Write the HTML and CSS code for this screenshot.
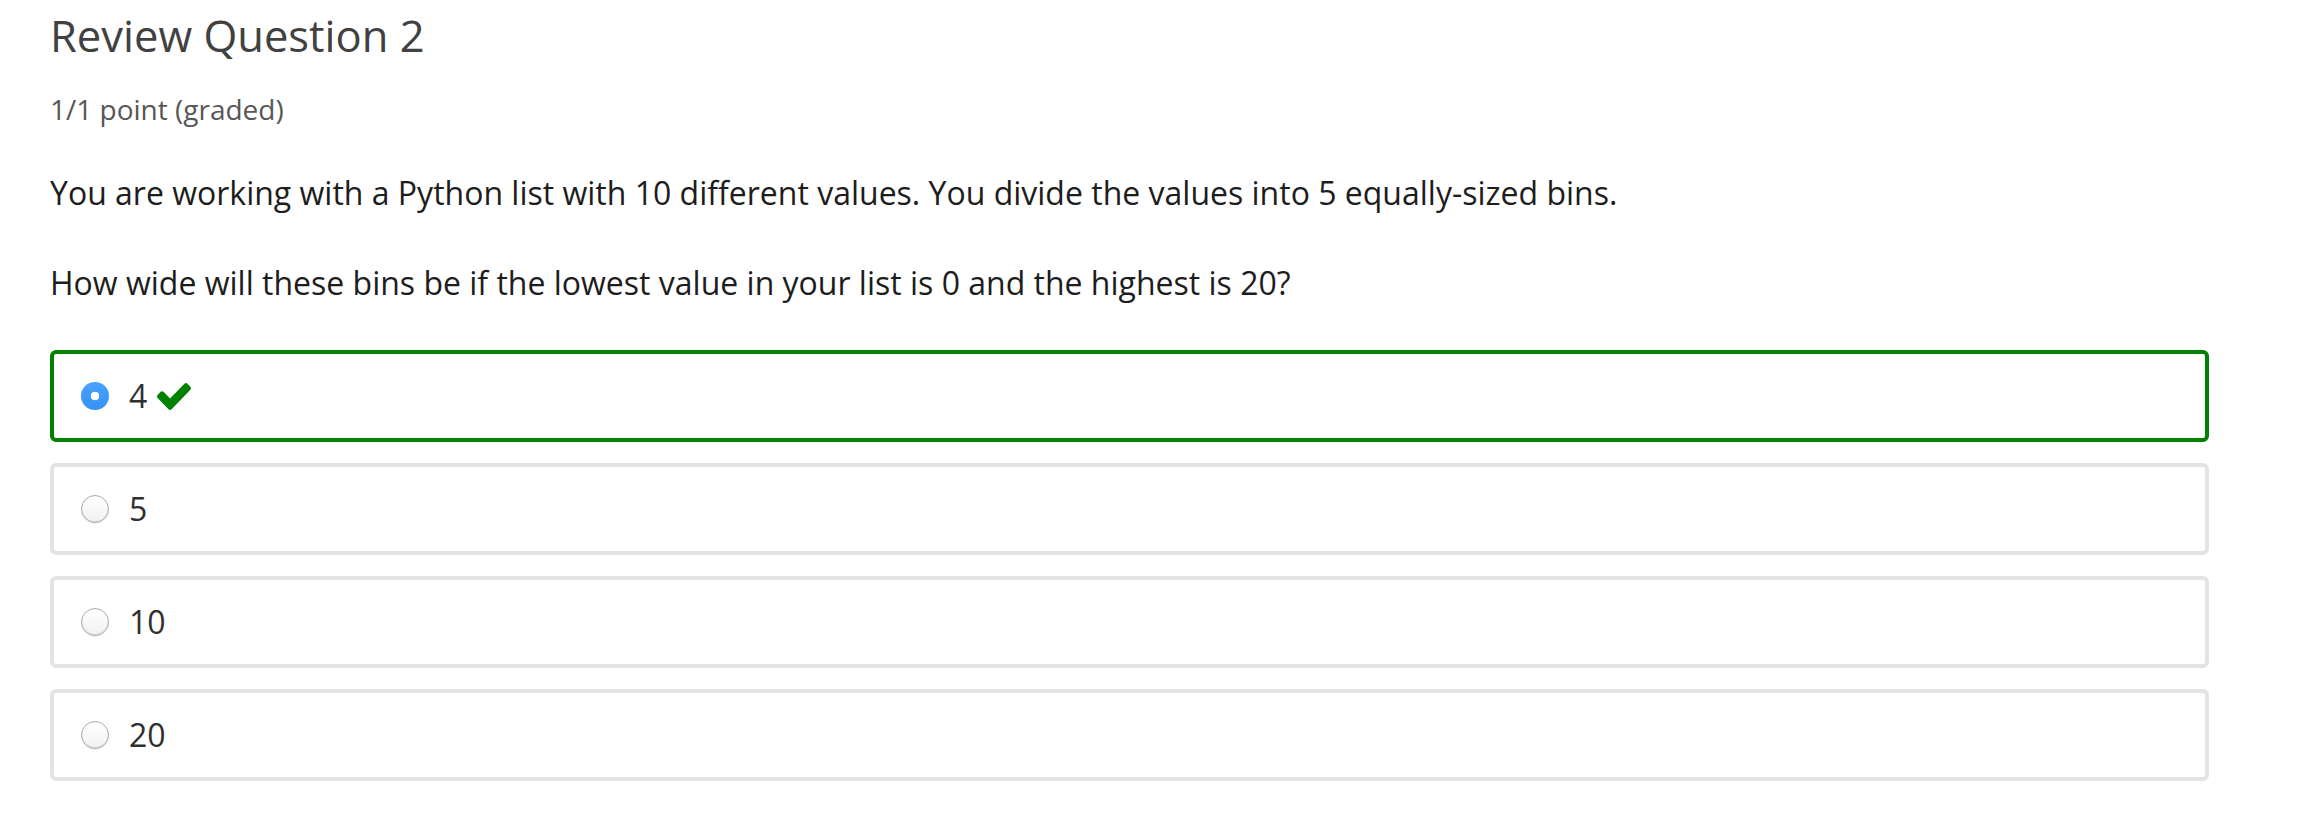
FILE: index.html
```html
<!DOCTYPE html>
<html lang="en">
<head>
<meta charset="utf-8">
<title>Review Question 2</title>
<link rel="stylesheet" href="styles.css">
</head>
<body>
<main class="problem">
  <h2 class="title">Review Question 2</h2>
  <div class="points">1/1 point (graded)</div>
  <p class="prompt">You are working with a Python list with 10 different values. You divide the values into 5 equally-sized bins.</p>
  <p class="prompt">How wide will these bins be if the lowest value in your list is 0 and the highest is 20?</p>
  <div class="choices">
    <label class="choice correct">
      <span class="radio checked"></span>
      <span class="label-text">4</span>
      <svg class="check" viewBox="121 334 1550 1188" preserveAspectRatio="none" aria-hidden="true"><path d="M1671 566q0 40-28 68l-724 724-136 136q-28 28-68 28t-68-28l-136-136-362-362q-28-28-28-68t28-68l136-136q28-28 68-28t68 28l294 295 656-657q28-28 68-28t68 28l136 136q28 28 28 68z"/></svg>
    </label>
    <label class="choice">
      <span class="radio"></span>
      <span class="label-text">5</span>
    </label>
    <label class="choice">
      <span class="radio"></span>
      <span class="label-text">10</span>
    </label>
    <label class="choice">
      <span class="radio"></span>
      <span class="label-text">20</span>
    </label>
  </div>
</main>
</body>
</html>
```
FILE: styles.css
```css
html, body {
  margin: 0;
  padding: 0;
  background: #ffffff;
}

body {
  font-family: "Open Sans", "Liberation Sans", sans-serif;
}

.problem {
  width: 2159px;
  padding: 6px 0 0 50px;
}

.title {
  margin: 0;
  font-size: 43.5px;
  line-height: 60px;
  font-weight: 400;
  color: #414141;
}

.points {
  margin-top: 25px;
  font-size: 28px;
  line-height: 37px;
  color: #575757;
}

.prompt {
  margin: 0;
  font-size: 32px;
  line-height: 44px;
  color: #1d1d1d;
}

.points + .prompt {
  margin-top: 43px;
}

.prompt + .prompt {
  margin-top: 46px;
}

.choices {
  margin-top: 45px;
  display: flex;
  flex-direction: column;
  gap: 21px;
}

.choice {
  box-sizing: border-box;
  height: 92px;
  border: 4px solid #e3e3e3;
  border-radius: 6px;
  display: flex;
  align-items: center;
  padding-left: 27px;
}

.choice.correct {
  border-color: #008100;
}

.radio {
  box-sizing: border-box;
  width: 28px;
  height: 28px;
  border-radius: 50%;
  flex: none;
  border: 1.5px solid #a9a9a9;
  background: linear-gradient(#ffffff, #f1f1f1);
  box-shadow: inset 0 -1px 1px rgba(0, 0, 0, 0.08), 0 1px 1px rgba(0, 0, 0, 0.06);
}

.radio.checked {
  border: none;
  background: radial-gradient(circle, #ffffff 0, #ffffff 4px, transparent 4.6px), linear-gradient(#4aa2ff, #3591f5);
  box-shadow: none;
}

.label-text {
  margin-left: 20px;
  font-size: 32px;
  line-height: 44px;
  color: #2f2f2f;
}

.check {
  width: 34px;
  height: 27px;
  margin-left: 10px;
  fill: #008100;
}
```
